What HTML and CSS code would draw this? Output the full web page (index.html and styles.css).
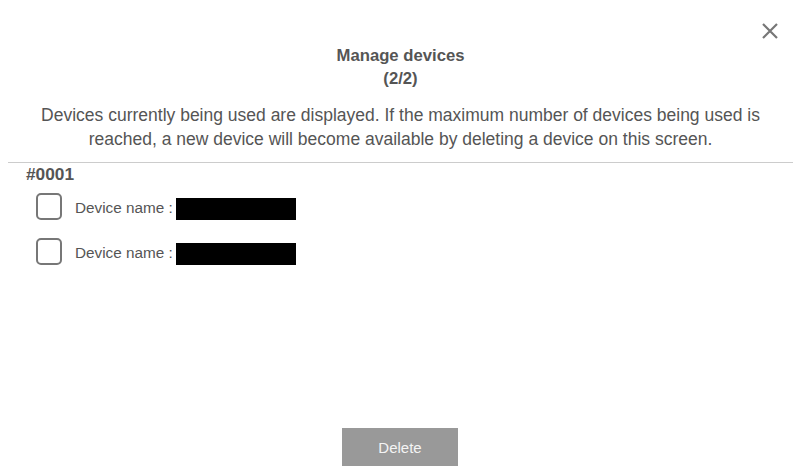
FILE: index.html
```html
<!DOCTYPE html>
<html lang="en">
<head>
<meta charset="utf-8">
<title>Manage devices</title>
<link rel="stylesheet" href="styles.css">
</head>
<body>
<div class="modal">
  <button class="close" aria-label="Close">
    <svg width="18" height="18" viewBox="0 0 18 18"><path d="M2 2 L16 16 M16 2 L2 16" stroke="#777" stroke-width="2.2" fill="none"/></svg>
  </button>
  <div class="header">
    <h1 class="title">Manage devices<br>(2/2)</h1>
    <p class="desc">Devices currently being used are displayed. If the maximum number of devices being used is reached, a new device will become available by deleting a device on this screen.</p>
  </div>
  <div class="divider"></div>
  <div class="group">
    <div class="group-name">#0001</div>
    <label class="row"><span class="check"></span><span class="label">Device name :</span><span class="redact"></span></label>
    <label class="row"><span class="check"></span><span class="label">Device name :</span><span class="redact"></span></label>
  </div>
  <div class="footer">
    <button class="delete">Delete</button>
  </div>
</div>
</body>
</html>
```

FILE: styles.css
```css
html, body {
  margin: 0;
  padding: 0;
  background: #fff;
}
body {
  font-family: "Liberation Sans", Arial, sans-serif;
  color: #555;
}
.modal {
  position: relative;
  height: 466px;
  box-sizing: border-box;
  padding: 0 8px;
  display: flex;
  flex-direction: column;
}
.close {
  position: absolute;
  top: 22px;
  right: 22px;
  width: 18px;
  height: 18px;
  padding: 0;
  border: 0;
  background: none;
  cursor: pointer;
}
.close svg { display: block; }
.header {
  padding-top: 44px;
  text-align: center;
}
.title {
  margin: 0;
  font-size: 16.7px;
  font-weight: bold;
  line-height: 23px;
}
.desc {
  margin: 13px 0 0;
  font-size: 17.5px;
  line-height: 24px;
}
.divider {
  margin-top: 11px;
  border-top: 1px solid #ccc;
}
.group {
  padding-left: 18px;
  padding-top: 1px;
}
.group-name {
  font-size: 17.3px;
  font-weight: bold;
  line-height: 20px;
}
.row {
  display: flex;
  align-items: center;
  margin-left: 10px;
  margin-top: 5px;
  height: 35px;
  font-size: 15.3px;
}
.row + .row { margin-top: 10px; }
.check {
  width: 22px;
  height: 23px;
  border: 2px solid #777;
  border-radius: 5px;
  flex: none;
}
.label {
  margin-left: 13px;
  padding-top: 3px;
}
.redact {
  width: 120px;
  height: 22px;
  background: #000;
  margin-left: 3px;
  margin-top: 4px;
}
.footer {
  margin-top: auto;
  display: flex;
  justify-content: center;
}
.delete {
  width: 116px;
  height: 38px;
  border: 0;
  background: #999;
  color: #f4f4f4;
  font-family: "Liberation Sans", Arial, sans-serif;
  font-size: 15px;
  margin-right: 1px;
}
```
